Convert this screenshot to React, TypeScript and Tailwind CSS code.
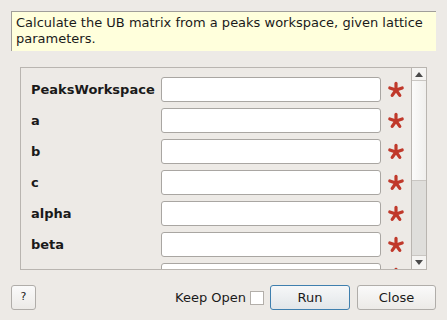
import React from 'react';

const fields = ['PeaksWorkspace', 'a', 'b', 'c', 'alpha', 'beta', 'gamma'];

// Red "mandatory" asterisk next to each field
const Star = () => (
  <svg width="18" height="18" viewBox="0 0 18 18" className="shrink-0">
    <g stroke="#c0392b" strokeWidth="3.2" strokeLinecap="round">
      <line x1="9" y1="9" x2="9" y2="2.4" />
      <line x1="9" y1="9" x2="15.2" y2="7" />
      <line x1="9" y1="9" x2="12.8" y2="14.4" />
      <line x1="9" y1="9" x2="5.2" y2="14.4" />
      <line x1="9" y1="9" x2="2.8" y2="7" />
    </g>
  </svg>
);

const Row = ({ name }: { name: string }) => (
  <div className="flex items-center h-[25px] shrink-0">
    <span className="w-[130px] font-bold text-[13px] text-[#1a1a1a]">{name}</span>
    <div className="w-[220px] h-[25px] bg-white border border-[#a9a6a2] rounded-[3px]" />
    <div className="ml-[6px] flex items-center">
      <Star />
    </div>
  </div>
);

export default function App() {
  return (
    <div
      className="w-[447px] h-[320px] bg-[#edeae6] flex flex-col overflow-hidden text-[#1a1a1a]"
      style={{ fontFamily: '"DejaVu Sans", sans-serif' }}
    >
      <div className="mt-[11px] mx-[11px] h-[40px] bg-[#ffffdc] border-t border-l border-[#a09e9a] px-[4px] pt-[3px] text-[13px] leading-[16px]">
        Calculate the UB matrix from a peaks workspace, given lattice parameters.
      </div>

      <div className="mt-[16px] ml-[20px] w-[407px] h-[203px] border border-[#b9b5b0] flex overflow-hidden">
        <div className="flex-1 flex flex-col gap-[6px] pl-[10px] pt-[9px] overflow-hidden">
          {fields.map((f) => (
            <Row key={f} name={f} />
          ))}
        </div>
        <div className="w-[15px] border-l border-[#b9b5b0] flex flex-col">
          <div className="h-[13px] bg-[#f5f4f2] border-b border-[#c9c6c2] flex items-center justify-center">
            <svg width="8" height="5" viewBox="0 0 8 5">
              <path d="M4 0 L8 5 L0 5 Z" fill="#4a4a4a" />
            </svg>
          </div>
          <div className="h-[100px] bg-gradient-to-r from-[#fbfbfa] to-[#f0efed] border-b border-[#c9c6c2]" />
          <div className="flex-1 bg-[#dfdedb]" />
          <div className="h-[14px] bg-[#f5f4f2] border-t border-[#c9c6c2] flex items-center justify-center">
            <svg width="8" height="5" viewBox="0 0 8 5">
              <path d="M0 0 L8 0 L4 5 Z" fill="#4a4a4a" />
            </svg>
          </div>
        </div>
      </div>

      <div className="mt-[15px] mx-[11px] flex items-center h-[25px]">
        <button className="w-[25px] h-[25px] rounded-[3px] border border-[#b0ada9] bg-gradient-to-b from-[#fafafa] to-[#eceae7] text-[11px]">
          ?
        </button>
        <div className="flex-1" />
        <span className="text-[13px]">Keep Open</span>
        <div className="ml-[4px] w-[14px] h-[14px] bg-white border border-[#b3afaa]" />
        <button className="ml-[6px] w-[80px] h-[25px] rounded-[3px] border border-[#3f7fae] bg-gradient-to-b from-[#f6f7f8] to-[#e2e6e9] text-[13px]">
          Run
        </button>
        <button className="ml-[7px] w-[79px] h-[25px] rounded-[3px] border border-[#b0ada9] bg-gradient-to-b from-[#fafafa] to-[#eceae7] text-[13px]">
          Close
        </button>
      </div>
    </div>
  );
}
